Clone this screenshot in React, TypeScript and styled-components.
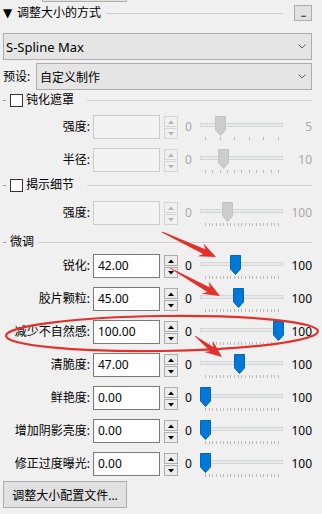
import React from "react";
import styled, { createGlobalStyle } from "styled-components";

const GlobalStyle = createGlobalStyle`
  html, body { margin: 0; padding: 0; background: #f0f0f0; }
  body {
    font-family: "Noto Sans", "Noto Sans CJK SC", sans-serif;
    font-size: 12px;
    color: #000;
  }
`;

const Page = styled.div`
  position: relative;
  width: 322px;
  height: 514px;
  box-sizing: border-box;
  padding: 0 10px 0 3px;
  background: #f0f0f0;
  overflow: hidden;
  display: flex;
  flex-direction: column;
`;

const TopStub = styled.div`
  margin-left: 39px;
  width: 85px;
  height: 2px;
  box-sizing: border-box;
  background: #e1e1e1;
  border: 1px solid #adadad;
  border-top: none;
`;

const Header = styled.div<{ $mt: number; $h?: number }>`
  display: flex;
  align-items: center;
  height: ${(p) => p.$h ?? 14}px;
  margin-top: ${(p) => p.$mt}px;
  line-height: 14px;
  white-space: nowrap;
`;

const Caret = styled.span`
  font-family: "DejaVu Sans", sans-serif;
  font-size: 12px;
  width: 14px;
`;

const Rule = styled.div<{ $ml: number; $mr?: number }>`
  flex: 1;
  height: 1px;
  background: #d0d0d0;
  margin-left: ${(p) => p.$ml}px;
  margin-right: ${(p) => p.$mr ?? 0}px;
`;

const Dash = styled.span`
  width: 3px;
  height: 1px;
  background: #a0a0a0;
  margin-right: 4px;
`;

const CheckBox = styled.span`
  width: 13px;
  height: 13px;
  box-sizing: border-box;
  border: 1px solid #333;
  background: #fff;
  margin-right: 3px;
`;

const DotsButton = styled.button`
  width: 18px;
  height: 16px;
  box-sizing: border-box;
  border: 1px solid #adadad;
  background: #e1e1e1;
  padding: 0;
  font-family: "Noto Sans", sans-serif;
  font-size: 10px;
  line-height: 14px;
  color: #000;
  display: flex;
  align-items: flex-end;
  justify-content: center;
  letter-spacing: -1px;
`;

const SelectRow = styled.div<{ $mt: number }>`
  display: flex;
  align-items: center;
  margin-top: ${(p) => p.$mt}px;
  height: 27px;
`;

const SelectLabel = styled.span`
  width: 33px;
  line-height: 27px;
`;

const Select = styled.div<{ $big?: boolean; $pl: number }>`
  flex: 1;
  height: 27px;
  box-sizing: border-box;
  border: 1px solid #adadad;
  background: #e5e5e5;
  display: flex;
  align-items: center;
  justify-content: space-between;
  padding: 0 5px 0 ${(p) => p.$pl}px;
  font-size: ${(p) => (p.$big ? 13 : 12)}px;
`;

const Row = styled.div<{ $mt: number }>`
  display: flex;
  align-items: flex-start;
  height: 24px;
  margin-top: ${(p) => p.$mt}px;
  white-space: nowrap;
`;

const RowLabel = styled.span`
  width: 87px;
  text-align: right;
  line-height: 24px;
`;

const NumInput = styled.div<{ $off?: boolean }>`
  margin-left: 3px;
  width: 67px;
  height: 24px;
  box-sizing: border-box;
  border: 1px solid ${(p) => (p.$off ? "#cccccc" : "#7a7a7a")};
  background: ${(p) => (p.$off ? "#f3f3f3" : "#ffffff")};
  padding-left: 4px;
  line-height: 22px;
`;

const Spinner = styled.div`
  margin-left: 4px;
  margin-top: 1px;
  width: 14px;
  display: flex;
  flex-direction: column;
  gap: 1px;
`;

const SpinBtn = styled.div<{ $off?: boolean }>`
  height: 11px;
  box-sizing: border-box;
  border: 1px solid ${(p) => (p.$off ? "#d5d5d5" : "#adadad")};
  background: ${(p) => (p.$off ? "#f0f0f0" : "#ececec")};
  display: flex;
  align-items: center;
  justify-content: center;
`;

const RangeText = styled.span<{ $off?: boolean }>`
  color: ${(p) => (p.$off ? "#a8a8a8" : "#000")};
  line-height: 24px;
`;

const MinText = styled(RangeText)`
  margin-left: 7px;
  width: 8px;
`;

const MaxText = styled(RangeText)`
  flex: 1;
  text-align: right;
`;

const Slider = styled.div`
  position: relative;
  margin-left: 7px;
  width: 83px;
  height: 26px;
  display: flex;
  flex-direction: column;
`;

const Track = styled.div`
  margin-top: 8px;
  height: 4px;
  box-sizing: border-box;
  border: 1px solid #d6d6d6;
  background: #e7eaea;
`;

const Ticks = styled.div`
  margin: 10px 0 0 5px;
  width: 74px;
  height: 3px;
  display: flex;
  justify-content: space-between;
`;

const Tick = styled.span`
  width: 1px;
  height: 3px;
  background: #bdbdbd;
`;

const ThumbSvg = styled.svg`
  position: absolute;
  top: 1px;
`;

const ProfileButton = styled.button`
  margin-top: 5px;
  width: 124px;
  height: 27px;
  box-sizing: border-box;
  border: 1px solid #adadad;
  background: #e1e1e1;
  font-family: "Noto Sans", "Noto Sans CJK SC", sans-serif;
  font-size: 12px;
  color: #000;
  padding: 0;
`;

const Overlay = styled.svg`
  position: absolute;
  left: 0;
  top: 0;
  pointer-events: none;
`;

const Chevron = () => (
  <svg width="8" height="5" viewBox="0 0 8 5">
    <polyline points="0.5,0.5 4,4 7.5,0.5" fill="none" stroke="#606060" strokeWidth="1" />
  </svg>
);

const Arrow = ({ up, off }: { up?: boolean; off?: boolean }) => (
  <svg width="6" height="4" viewBox="0 0 6 4">
    <polygon
      points={up ? "0,4 6,4 3,0.5" : "0,0 6,0 3,3.5"}
      fill={off ? "#b5b5b5" : "#000"}
    />
  </svg>
);

type SliderRowProps = {
  label: string;
  value?: string;
  v: number;
  max: number;
  ticks: number;
  off?: boolean;
  mt: number;
};

const SliderRow = ({ label, value, v, max, ticks, off, mt }: SliderRowProps) => {
  const left = (v / max) * 72.5;
  return (
    <Row $mt={mt}>
      <RowLabel>{label}:</RowLabel>
      <NumInput $off={off}>{value}</NumInput>
      <Spinner>
        <SpinBtn $off={off}>
          <Arrow up off={off} />
        </SpinBtn>
        <SpinBtn $off={off}>
          <Arrow off={off} />
        </SpinBtn>
      </Spinner>
      <MinText $off={off}>0</MinText>
      <Slider>
        <Track />
        <Ticks>
          {Array.from({ length: ticks }).map((_, i) => (
            <Tick key={i} />
          ))}
        </Ticks>
        <ThumbSvg width="11" height="20" viewBox="0 0 11 20" style={{ left: `${left}px` }}>
          <path
            d="M0.5,0.5 H10.5 V14 L5.5,19.5 L0.5,14 Z"
            fill={off ? "#cccccc" : "#0078d7"}
            stroke={off ? "#c4c4c4" : "#0067bd"}
            strokeWidth="1"
          />
        </ThumbSvg>
      </Slider>
      <MaxText $off={off}>{max}</MaxText>
    </Row>
  );
};

const arrowPoints = (x1: number, y1: number, x2: number, y2: number) => {
  const dx = x2 - x1;
  const dy = y2 - y1;
  const len = Math.hypot(dx, dy);
  const ux = dx / len;
  const uy = dy / len;
  const nx = -uy;
  const ny = ux;
  const L = 17;
  const bx = x2 - ux * L;
  const by = y2 - uy * L;
  const bx2 = x2 - ux * (L - 4);
  const by2 = y2 - uy * (L - 4);
  const pts = [
    [x1 + nx * 0.4, y1 + ny * 0.4],
    [bx2 + nx * 2.6, by2 + ny * 2.6],
    [bx + nx * 7, by + ny * 7],
    [x2, y2],
    [bx - nx * 7, by - ny * 7],
    [bx2 - nx * 2.6, by2 - ny * 2.6],
    [x1 - nx * 0.4, y1 - ny * 0.4],
  ];
  return pts.map((p) => `${p[0].toFixed(1)},${p[1].toFixed(1)}`).join(" ");
};

const fineRows = [
  { label: "锐化", value: "42.00", v: 42 },
  { label: "胶片颗粒", value: "45.00", v: 45 },
  { label: "减少不自然感", value: "100.00", v: 100 },
  { label: "清脆度", value: "47.00", v: 47 },
  { label: "鲜艳度", value: "0.00", v: 0 },
  { label: "增加阴影亮度", value: "0.00", v: 0 },
  { label: "修正过度曝光", value: "0.00", v: 0 },
];

export default function App() {
  return (
    <>
      <GlobalStyle />
      <Page>
        <TopStub />
        <Header $mt={3} $h={16}>
          <Caret>▼</Caret>
          <span>调整大小的方式</span>
          <Rule $ml={5} $mr={11} />
          <DotsButton>...</DotsButton>
        </Header>
        <SelectRow $mt={12}>
          <Select $big $pl={2}>
            <span>S-Spline Max</span>
            <Chevron />
          </Select>
        </SelectRow>
        <SelectRow $mt={3}>
          <SelectLabel>预设:</SelectLabel>
          <Select $pl={3}>
            <span>自定义制作</span>
            <Chevron />
          </Select>
        </SelectRow>

        <Header $mt={3}>
          <Dash />
          <CheckBox />
          <span>钝化遮罩</span>
          <Rule $ml={13} />
        </Header>
        <SliderRow mt={8} label="强度" v={1} max={5} ticks={6} off />
        <SliderRow mt={9} label="半径" v={2.5} max={10} ticks={11} off />

        <Header $mt={6}>
          <Dash />
          <CheckBox />
          <span>揭示细节</span>
          <Rule $ml={13} />
        </Header>
        <SliderRow mt={9} label="强度" v={30} max={100} ticks={21} off />

        <Header $mt={10}>
          <Dash />
          <span>微调</span>
          <Rule $ml={4} />
        </Header>
        {fineRows.map((r, i) => (
          <SliderRow
            key={r.label}
            mt={i === 0 ? 5 : 9}
            label={r.label}
            value={r.value}
            v={r.v}
            max={100}
            ticks={21}
          />
        ))}
        <ProfileButton>调整大小配置文件...</ProfileButton>

        <Overlay width="322" height="514" viewBox="0 0 322 514">
          <ellipse
            cx="162"
            cy="333.5"
            rx="156"
            ry="17.5"
            fill="none"
            stroke="#e2302b"
            strokeWidth="2.2"
            transform="rotate(-0.8 162 333.5)"
          />
          <polygon points={arrowPoints(162, 232, 216, 257)} fill="#e2302b" />
          <polygon points={arrowPoints(170, 268, 220, 296)} fill="#e2302b" />
          <polygon points={arrowPoints(195, 336, 222, 357)} fill="#e2302b" />
        </Overlay>
      </Page>
    </>
  );
}
